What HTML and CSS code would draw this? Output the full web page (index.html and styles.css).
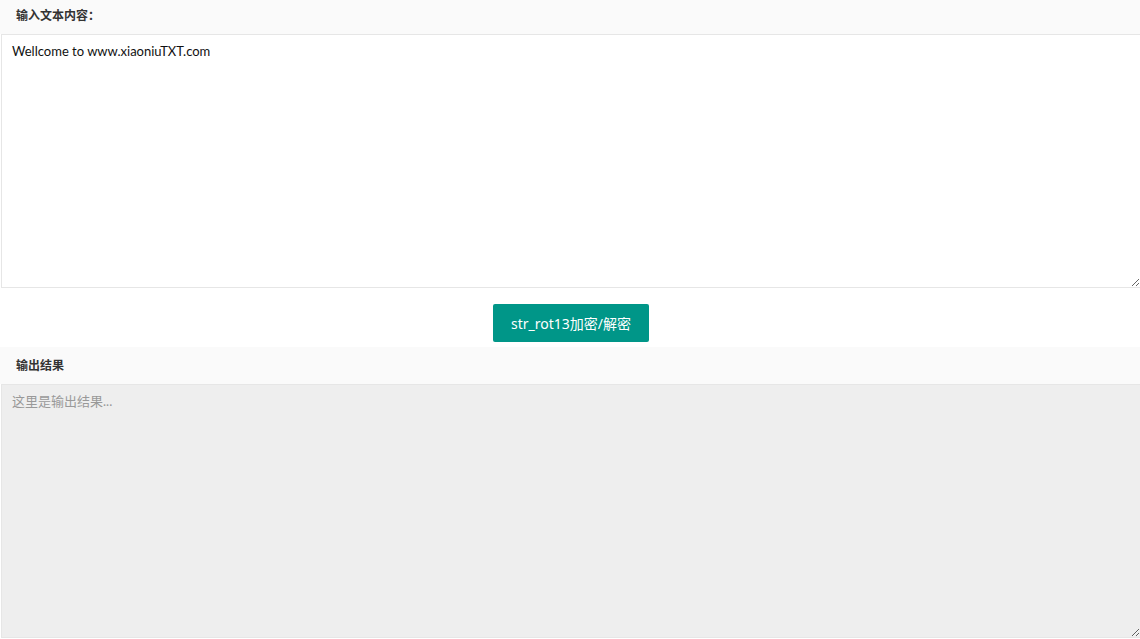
FILE: index.html
```html
<!DOCTYPE html>
<html lang="zh-CN">
<head>
    <meta charset="UTF-8">
    <title>str_rot13加密/解密</title>
    <link rel="stylesheet" href="styles.css">
</head>
<body>
    <div class="panel">
        <div class="panel-header">输入文本内容：</div>
        <textarea class="text-box" id="inputText">Wellcome to www.xiaoniuTXT.com</textarea>
    </div>

    <div class="actions">
        <button class="btn" id="rotBtn">str_rot13加密/解密</button>
    </div>

    <div class="panel">
        <div class="panel-header header-tall">输出结果</div>
        <textarea class="text-box output-box" id="outputText" placeholder="这里是输出结果..." readonly></textarea>
    </div>

    <script>
        function rot13(str) {
            return str.replace(/[a-zA-Z]/g, function (c) {
                const base = c <= 'Z' ? 65 : 97;
                return String.fromCharCode((c.charCodeAt(0) - base + 13) % 26 + base);
            });
        }

        document.getElementById('rotBtn').addEventListener('click', function () {
            const text = document.getElementById('inputText').value;
            document.getElementById('outputText').value = rot13(text);
        });
    </script>
</body>
</html>
```

FILE: styles.css
```css
body {
    margin: 0;
    font-family: "Noto Sans", "Noto Sans CJK SC", sans-serif;
    color: #333;
    background-color: #fff;
    overflow: hidden;
}
.panel-header {
    height: 34px;
    line-height: 32px;
    padding-left: 16px;
    background-color: #fafafa;
    font-size: 12px;
    font-weight: bold;
    color: #333;
}
.header-tall {
    height: 37px;
    line-height: 37px;
}
.text-box {
    display: block;
    box-sizing: border-box;
    width: 1140px;
    height: 254px;
    margin: 0 0 0 1px;
    padding: 6px 10px;
    border: 1px solid #e6e6e6;
    font-family: Lato, "Noto Sans CJK SC", sans-serif;
    font-size: 13px;
    line-height: 20px;
    color: #111;
    background-color: #fff;
    outline: none;
    resize: vertical;
}
.output-box {
    background-color: #eee;
}
.output-box::placeholder {
    color: #999;
}
.actions {
    display: flex;
    justify-content: center;
    padding: 16px 0 5px 2px;
}
.btn {
    height: 38px;
    width: 156px;
    padding: 0 18px;
    border: none;
    border-radius: 2px;
    background-color: #009688;
    color: #fff;
    font-family: "Noto Sans", "Noto Sans CJK SC", sans-serif;
    font-size: 14px;
    cursor: pointer;
}
```
